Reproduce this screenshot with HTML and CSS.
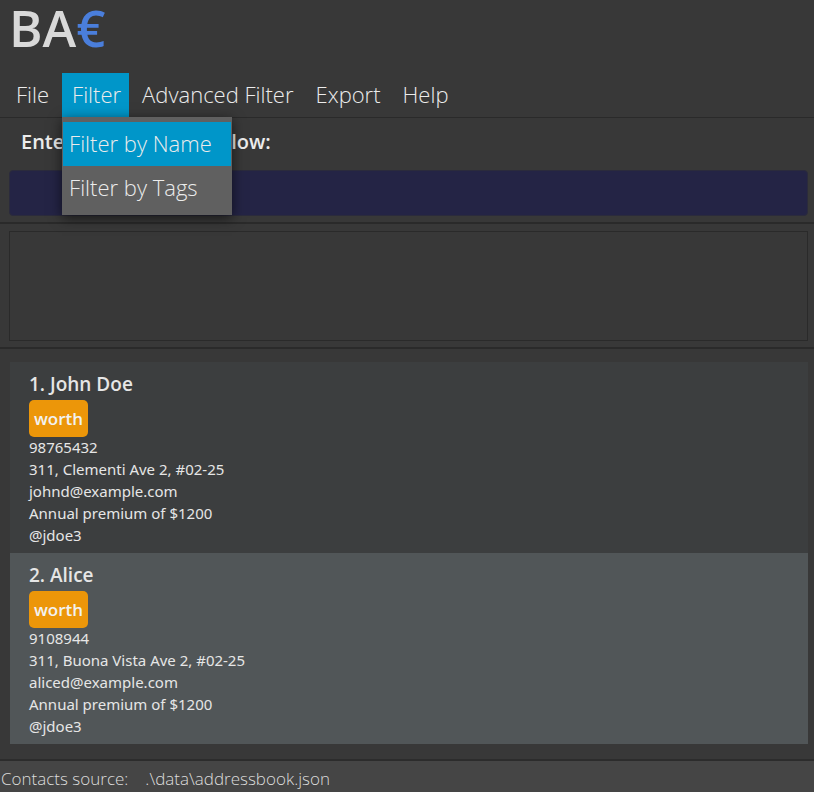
FILE: index.html
```html
<!DOCTYPE html>
<html lang="en">
<head>
<meta charset="utf-8">
<title>BA€</title>
<link rel="stylesheet" href="styles.css">
</head>
<body>
<header class="logo">BA<span class="euro">€</span></header>
<nav class="menubar">
  <button class="menu">File</button>
  <div class="menu-group">
    <button class="menu active" aria-expanded="true">Filter</button>
    <div class="dropdown">
      <button class="item active">Filter by Name</button>
      <button class="item">Filter by Tags</button>
    </div>
  </div>
  <button class="menu">Advanced Filter</button>
  <button class="menu">Export</button>
  <button class="menu">Help</button>
</nav>
<main class="content">
  <section class="command">
    <label class="prompt" for="command">Enter your request below:</label>
    <input class="field" id="command" type="text">
  </section>
  <section class="result"><output class="result-box"></output></section>
  <ol class="contacts">
    <li class="card">
      <h2 class="name">1. John Doe</h2>
      <span class="tag">worth</span>
      <p class="line">98765432</p>
      <p class="line">311, Clementi Ave 2, #02-25</p>
      <p class="line">johnd@example.com</p>
      <p class="line">Annual premium of $1200</p>
      <p class="line">@jdoe3</p>
    </li>
    <li class="card even">
      <h2 class="name">2. Alice</h2>
      <span class="tag">worth</span>
      <p class="line">9108944</p>
      <p class="line">311, Buona Vista Ave 2, #02-25</p>
      <p class="line">aliced@example.com</p>
      <p class="line">Annual premium of $1200</p>
      <p class="line">@jdoe3</p>
    </li>
  </ol>
</main>
<footer class="status"><span>Contacts source:</span><span>.\data\addressbook.json</span></footer>
</body>
</html>
```
FILE: styles.css
```css
* {
  box-sizing: border-box;
}

body {
  margin: 0;
  min-height: 100vh;
  display: flex;
  flex-direction: column;
  background: #383838;
  color: #ececec;
  font-family: "Open Sans", "Noto Sans", sans-serif;
}

button {
  border: 0;
  background: none;
  color: inherit;
  font: inherit;
  text-align: left;
  white-space: nowrap;
}

.logo {
  padding: 0 10px 19px 9px;
  color: #d9d9d9;
  font-size: 51px;
  font-weight: 600;
  line-height: 54px;
}

.euro {
  color: #4a7edb;
}

.menubar {
  display: flex;
  padding-left: 6px;
  border-bottom: 1px solid #2a2a2a;
  font-size: 22px;
  font-weight: 300;
  line-height: 42px;
}

.menu {
  display: block;
  padding: 0 8px 2px 10px;
}

.active {
  background: #0096c9;
}

.menu-group {
  position: relative;
  margin: 0 3px 0 5px;
}

.menu-group + .menu ~ .menu {
  margin-left: 4px;
}

.dropdown {
  position: absolute;
  top: 100%;
  left: 0;
  width: 170px;
  padding: 5px 1px;
  background: #606060;
  box-shadow: 0 3px 12px rgba(0, 0, 0, 0.6);
}

.item {
  display: block;
  width: 100%;
  padding: 0 6px 2px;
}

.content {
  flex: 1;
}

.command {
  padding: 10px 6px 6px 9px;
  border-bottom: 2px solid #2a2a2a;
}

.prompt {
  display: block;
  padding-left: 12px;
  margin-bottom: 14px;
  font-size: 20px;
  font-weight: 600;
  line-height: 28px;
}

.field {
  display: block;
  width: 100%;
  height: 46px;
  padding: 0 12px;
  border: 1px solid #2b2b3c;
  border-radius: 4px;
  background: #242445;
  color: #ececec;
  font: inherit;
}

.result {
  padding: 7px 6px 6px 9px;
  border-bottom: 2px solid #2a2a2a;
}

.result-box {
  display: block;
  height: 110px;
  border: 1px solid #2a2a2a;
}

.contacts {
  margin: 0;
  padding: 13px 6px 15px 10px;
  list-style: none;
}

.card {
  padding: 10px 19px 7px;
  background: #3c3e3f;
  color: #e6e6e6;
}

.even {
  background: #515658;
}

.name {
  margin: 0 0 4px;
  font-size: 19px;
  font-weight: 600;
  line-height: 24px;
}

.tag {
  display: block;
  width: fit-content;
  padding: 0 5px;
  margin-bottom: -1px;
  border-radius: 5px;
  background: #ec9609;
  color: #f2f2f2;
  font-size: 17px;
  font-weight: 600;
  line-height: 37px;
}

.line {
  margin: 0;
  font-family: "Noto Sans", "Open Sans", sans-serif;
  font-size: 15px;
  line-height: 22px;
}

.status {
  display: flex;
  gap: 17px;
  padding: 4px 1px;
  border-top: 2px solid #2c2c2c;
  background: #454545;
  color: #dcdcdc;
  font-size: 17px;
  font-weight: 300;
  line-height: 28px;
}
```
